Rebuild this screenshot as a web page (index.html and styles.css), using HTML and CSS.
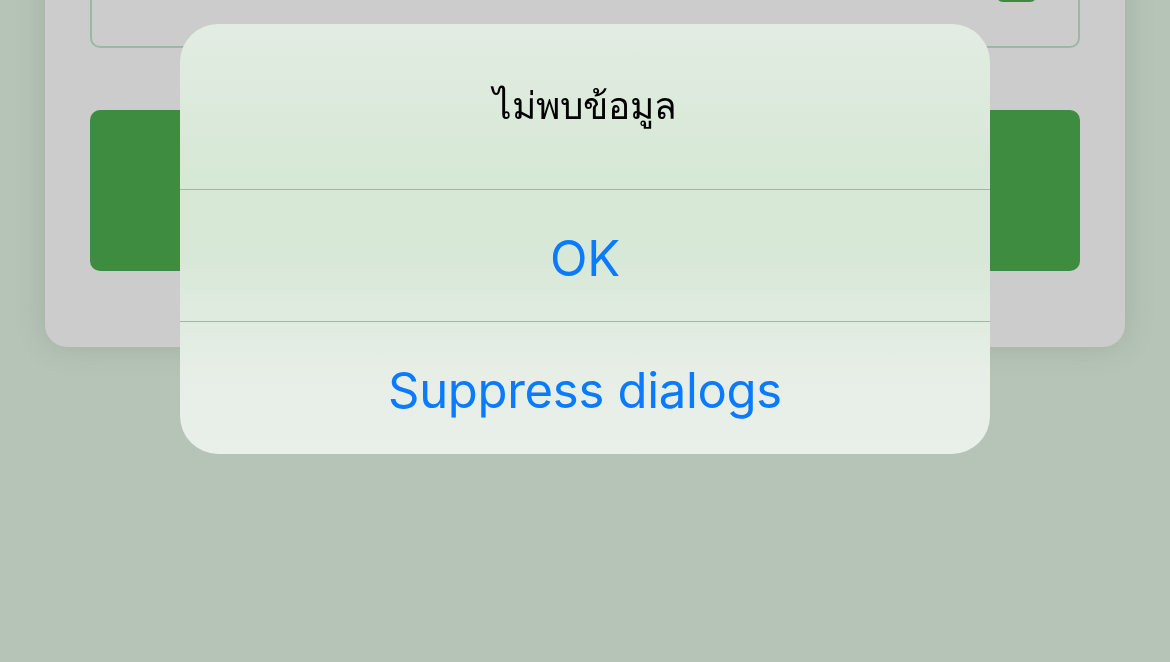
FILE: index.html
```html
<!DOCTYPE html>
<html lang="th">
<head>
<meta charset="utf-8">
<link rel="stylesheet" href="styles.css">
</head>
<body>
<main class="card">
  <div class="field">
    <span class="toggle"></span>
  </div>
  <div class="button-green"></div>
</main>
<div class="overlay">
  <div class="alert">
    <div class="alert-title">ไม่พบข้อมูล</div>
    <div class="alert-action">OK</div>
    <div class="alert-action">Suppress dialogs</div>
  </div>
</div>
</body>
</html>
```

FILE: styles.css
```css
html, body {
  margin: 0;
  padding: 0;
  width: 1170px;
  height: 662px;
  overflow: hidden;
  background: #b6c4b7;
  font-family: "Inter", "Roboto", "Noto Sans", "DejaVu Sans", sans-serif;
}

*, *::before, *::after {
  box-sizing: border-box;
}

.card {
  margin: -60px 45px 0;
  padding: 0 45px 76px;
  background: #cccccc;
  border-radius: 0 0 22px 22px;
  box-shadow: 0 0 30px rgba(60, 90, 60, 0.18);
  display: flex;
  flex-direction: column;
  gap: 62px;
}

.field {
  height: 108px;
  border: 2px solid #9bb8a6;
  border-radius: 10px;
  display: flex;
  justify-content: flex-end;
  align-items: flex-end;
  padding: 0 41px 44px 0;
}

.toggle {
  width: 41px;
  height: 40px;
  background: #3d8b40;
  border-radius: 7px;
}

.button-green {
  height: 161px;
  background: #3d8c40;
  border-radius: 10px;
}

.overlay {
  position: fixed;
  inset: 0;
  display: flex;
  justify-content: center;
  align-items: flex-start;
  padding-top: 24px;
}

.alert {
  width: 810px;
  height: 430px;
  border-radius: 38px;
  overflow: hidden;
  background: linear-gradient(180deg, #e3ece3 0%, #d6e8d6 35%, #d8e8d8 55%, #e6eee6 80%, #e9efe9 100%);
  display: flex;
  flex-direction: column;
}

.alert-title {
  height: 165px;
  display: flex;
  align-items: center;
  justify-content: center;
  font-size: 37px;
  color: #000;
  padding-bottom: 2px;
}

.alert-action {
  height: 132px;
  border-top: 1px solid #a3b5a3;
  display: flex;
  align-items: center;
  justify-content: center;
  font-size: 49px;
  color: #0a7aff;
  letter-spacing: -0.3px;
  padding-top: 6px;
}
```
